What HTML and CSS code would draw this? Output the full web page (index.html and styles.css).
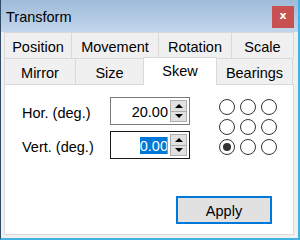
FILE: index.html
```html
<!DOCTYPE html>
<html lang="en">
<head>
    <meta charset="UTF-8">
    <title>Transform</title>
    <link rel="stylesheet" href="styles.css">
</head>
<body>
    <div class="window">
        <div class="titlebar">
            <span class="title">Transform</span>
            <button class="close-button">x</button>
        </div>
        <div class="client">
            <div class="tab-row back-row">
                <div class="tab" style="width: 68px">Position</div>
                <div class="tab" style="width: 87px">Movement</div>
                <div class="tab" style="width: 73px">Rotation</div>
                <div class="tab" style="width: 62px">Scale</div>
            </div>
            <div class="tab-row front-row">
                <div class="tab" style="width: 72px">Mirror</div>
                <div class="tab" style="width: 68px">Size</div>
                <div class="tab selected" style="width: 74px">Skew</div>
                <div class="tab" style="width: 76px">Bearings</div>
            </div>
            <div class="panel">
                <div class="top">
                    <div class="fields">
                        <div class="field">
                            <label>Hor. (deg.)</label>
                            <div class="spin-box">
                                <span class="value">20.00</span>
                                <div class="spinner">
                                    <span class="spin-up"></span>
                                    <span class="spin-down"></span>
                                </div>
                            </div>
                        </div>
                        <div class="field">
                            <label>Vert. (deg.)</label>
                            <div class="spin-box focused">
                                <span class="value"><span class="selection">0.00</span><span class="caret"></span></span>
                                <div class="spinner">
                                    <span class="spin-up"></span>
                                    <span class="spin-down"></span>
                                </div>
                            </div>
                        </div>
                    </div>
                    <div class="anchors">
                        <span class="radio"></span>
                        <span class="radio"></span>
                        <span class="radio"></span>
                        <span class="radio"></span>
                        <span class="radio"></span>
                        <span class="radio"></span>
                        <span class="radio checked"></span>
                        <span class="radio"></span>
                        <span class="radio"></span>
                    </div>
                </div>
                <button class="apply-button">Apply</button>
            </div>
        </div>
    </div>
</body>
</html>
```

FILE: styles.css
```css
* {
    box-sizing: border-box;
}
body {
    margin: 0;
    font-family: "Liberation Sans", Arial, sans-serif;
    font-size: 14.5px;
    color: #000000;
}
.window {
    width: 300px;
    height: 240px;
    display: flex;
    flex-direction: column;
    border-left: 1px solid #2f4b66;
    border-right: 2px solid #43b1e2;
    border-bottom: 2px solid #43b1e2;
    background-color: #f0f0f0;
}
.titlebar {
    height: 32px;
    display: flex;
    align-items: center;
    padding-left: 5px;
    background: linear-gradient(#9ebbd9, #c3d6ec);
}
.title {
    flex: 1;
    padding-top: 2px;
}
.close-button {
    width: 22px;
    height: 22px;
    margin-right: 4px;
    margin-top: 2px;
    border: none;
    padding: 0 0 3px 0;
    background-color: #c75050;
    color: #ffffff;
    font-family: "DejaVu Sans", sans-serif;
    font-size: 11px;
    font-weight: bold;
}
.client {
    flex: 1;
    display: flex;
    flex-direction: column;
    padding: 0 4px 3px 3px;
}
.tab-row {
    display: flex;
    height: 26px;
}
.tab {
    display: flex;
    align-items: center;
    justify-content: center;
    padding-top: 3px;
    border-top: 1px solid #d9d9d9;
    border-right: 1px solid #d9d9d9;
    background-color: #f0f0f0;
}
.tab:first-child {
    border-left: 1px solid #d9d9d9;
}
.tab.selected {
    position: relative;
    z-index: 1;
    height: 28px;
    margin-top: -1px;
    margin-left: -1px;
    padding-top: 0;
    padding-bottom: 1px;
    border-left: 1px solid #d9d9d9;
    background-color: #ffffff;
}
.panel {
    flex: 1;
    display: flex;
    flex-direction: column;
    border: 1px solid #d9d9d9;
    background-color: #ffffff;
}
.top {
    display: flex;
    padding: 12px 0 0 17px;
}
.fields {
    display: flex;
    flex-direction: column;
    gap: 6px;
}
.field {
    display: flex;
    align-items: center;
}
.field label {
    width: 88px;
    padding-top: 4px;
}
.spin-box {
    width: 80px;
    height: 28px;
    display: flex;
    align-items: center;
    border: 1px solid #7a7a7a;
    padding: 0 2px 0 4px;
}
.spin-box.focused {
    border-color: #1a1a1a;
}
.value {
    flex: 1;
    display: flex;
    justify-content: flex-end;
    padding-right: 2px;
    padding-top: 1px;
}
.selection {
    background-color: #0078d7;
    color: #ffffff;
    line-height: 16px;
    padding-top: 1px;
}
.caret {
    width: 1px;
    margin-left: -1px;
    background-color: #e08a1e;
}
.spinner {
    width: 17px;
    height: 22px;
    display: flex;
    flex-direction: column;
}
.spin-up,
.spin-down {
    flex: 1;
    display: flex;
    align-items: center;
    justify-content: center;
    border: 1px solid #adadad;
    background-color: #e1e1e1;
}
.spin-down {
    border-top: none;
}
.spin-up::after,
.spin-down::after {
    content: "";
    border-left: 4px solid transparent;
    border-right: 4px solid transparent;
}
.spin-up::after {
    border-bottom: 4px solid #000000;
}
.spin-down::after {
    border-top: 4px solid #000000;
}
.anchors {
    display: grid;
    grid-template-columns: repeat(3, 16px);
    grid-auto-rows: 16px;
    column-gap: 5px;
    row-gap: 4px;
    margin: 2px 0 0 29px;
}
.radio {
    display: flex;
    align-items: center;
    justify-content: center;
    border: 1px solid #333333;
    border-radius: 50%;
    background-color: #ffffff;
}
.radio.checked::after {
    content: "";
    width: 8px;
    height: 8px;
    border-radius: 50%;
    background-color: #333333;
}
.apply-button {
    align-self: flex-end;
    width: 96px;
    height: 28px;
    margin: auto 21px 10px 0;
    border: 2px solid #0078d7;
    background-color: #e1e1e1;
    font-family: inherit;
    font-size: 14.5px;
    color: #000000;
    padding: 1px 0 0 0;
}
```
